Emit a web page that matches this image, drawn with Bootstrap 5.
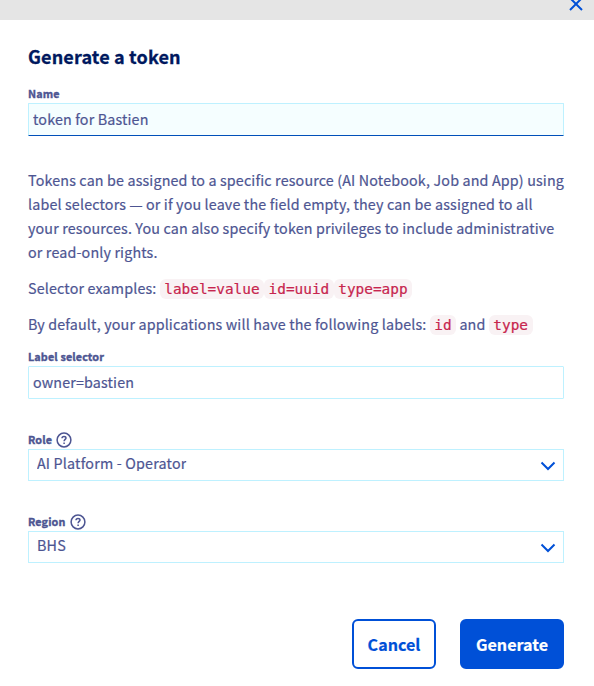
<!DOCTYPE html>
<html lang="en">
<head>
<meta charset="utf-8">
<meta name="viewport" content="width=device-width, initial-scale=1">
<title>Generate a token</title>
<link href="https://cdn.jsdelivr.net/npm/bootstrap@5.3.0/dist/css/bootstrap.min.css" rel="stylesheet">
<style>
:root { --ink: #4d5592; --brand: #0050d7; --line: #bef1ff; }
body { font-family: "Noto Sans CJK SC", "Noto Sans", sans-serif; font-size: 14.3px; line-height: 24px; letter-spacing: .15px; color: var(--ink); font-weight: 400; -webkit-text-stroke: .2px; overflow: hidden; }
.topbar { height: 20px; background: #e5e5e5; padding-right: 11px; }
.close-x { width: 14px; height: 14px; margin-top: -3px; }
.panel { padding: 23px 30px 0 28px; }
h1 { font-size: 18px; line-height: 26px; font-weight: 700; color: #00185e; margin-bottom: 17px; -webkit-text-stroke: .3px; }
.field-label { height: 17px; font-size: 10.8px; line-height: 15px; padding-bottom: 2px; font-weight: 700; margin: 0; gap: 4px; letter-spacing: .12px; -webkit-text-stroke: .35px; }
.box-input { height: 33px; border: 1px solid var(--line); border-radius: 1px; padding: 0 4px 2px; color: var(--ink); font-size: 14.3px; letter-spacing: .15px; line-height: 29px; background: #fff; -webkit-text-stroke: .2px; }
.box-input:focus { box-shadow: none; }
.box-active { background: #f5feff; border-bottom-color: #0050b9; }
.box-select { height: 32px; border: 1px solid var(--line); padding: 0 8px; }
.box-select .value { height: 25px; padding-top: 1px; line-height: 24px; letter-spacing: .18px; clip-path: inset(0 0 4px 0); }
.box-select svg { width: 16px; height: 10px; margin-top: 11px; margin-right: -1px; }
.next-field { margin-top: 33px; }
.actions { margin-top: 56px; }
.intro { margin-top: 32px; }
.note { height: 24px; }
.last-note { margin-bottom: 13px; }
p { margin-bottom: 12px; white-space: nowrap; }
.dash { font-family: "Open Sans", sans-serif; font-size: 13px; line-height: 1; }
code { font-family: "DejaVu Sans Mono", monospace; font-size: 14.4px; letter-spacing: 0; line-height: 20px; color: #c7254e; background: #f9f2f4; padding: 2px 4.5px; border-radius: 6px; -webkit-text-stroke: .2px; }
.btn-box { height: 50px; border: 2px solid var(--brand); border-radius: 6px; padding: 0; font-size: 16.1px; letter-spacing: 0; font-weight: 700; line-height: 46px; }
.btn-cancel { width: 84px; color: var(--brand); background: #fff; }
.btn-generate { width: 104px; color: #fff; background: var(--brand); }
.help { width: 16px; height: 16px; }
</style>
</head>
<body>
<div class="topbar d-flex justify-content-end">
<svg class="close-x" viewBox="0 0 14 14" fill="none" stroke="#0050d7" stroke-width="2"><path d="M1 1l12 12M13 1L1 13"/></svg>
</div>
<main class="panel">
<h1>Generate a token</h1>
<label class="field-label d-block" for="name">Name</label>
<input id="name" class="box-input box-active form-control" value="token for Bastien">
<p class="intro">Tokens can be assigned to a specific resource (AI Notebook, Job and App) using<br>label selectors <span class="dash">—</span> or if you leave the field empty, they can be assigned to all<br>your resources. You can also specify token privileges to include administrative<br>or read-only rights.</p>
<p class="note">Selector examples: <code>label=value</code><code>id=uuid</code><code>type=app</code></p>
<p class="note last-note">By default, your applications will have the following labels: <code>id</code> and <code>type</code></p>
<label class="field-label d-block" for="selector">Label selector</label>
<input id="selector" class="box-input form-control" value="owner=bastien">
<div class="field-label next-field d-flex align-items-center">Role
<svg class="help" viewBox="0 0 16 16" fill="none" stroke="#4d5592" stroke-width="1.5"><circle cx="8" cy="8" r="6.9"/><path d="M6 6.3c0-1.2.8-1.9 2-1.9s2 .7 2 1.7c0 1.3-1.9 1.4-1.9 3.1M8.1 10.4v1.5"/></svg></div>
<div class="box-select d-flex justify-content-between"><div class="value">AI Platform - Operator</div>
<svg viewBox="0 0 16 10" fill="none" stroke="#0050d7" stroke-width="2"><path d="M1.5 1.5L8 8l6.5-6.5"/></svg></div>
<div class="field-label next-field d-flex align-items-center">Region
<svg class="help" viewBox="0 0 16 16" fill="none" stroke="#4d5592" stroke-width="1.5"><circle cx="8" cy="8" r="6.9"/><path d="M6 6.3c0-1.2.8-1.9 2-1.9s2 .7 2 1.7c0 1.3-1.9 1.4-1.9 3.1M8.1 10.4v1.5"/></svg></div>
<div class="box-select d-flex justify-content-between"><div class="value">BHS</div>
<svg viewBox="0 0 16 10" fill="none" stroke="#0050d7" stroke-width="2"><path d="M1.5 1.5L8 8l6.5-6.5"/></svg></div>
<div class="actions d-flex justify-content-end gap-4">
<button class="btn btn-box btn-cancel">Cancel</button>
<button class="btn btn-box btn-generate">Generate</button>
</div>
</main>
<script src="https://cdn.jsdelivr.net/npm/bootstrap@5.3.0/dist/js/bootstrap.bundle.min.js"></script>
</body>
</html>
